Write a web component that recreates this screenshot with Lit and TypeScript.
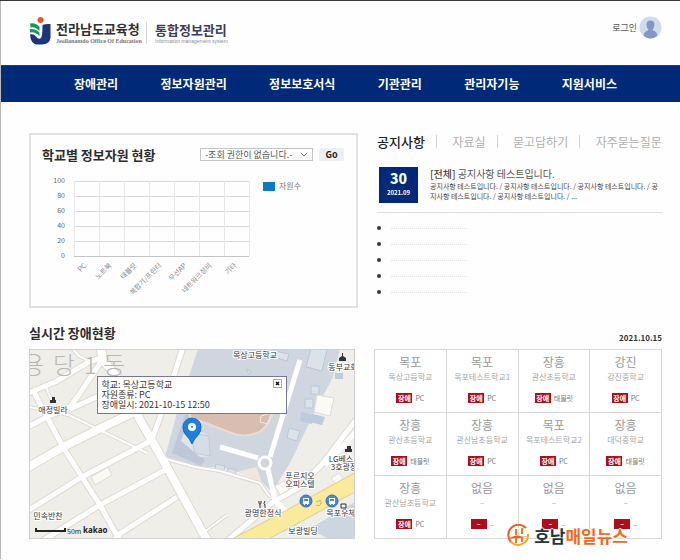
import { LitElement, html, svg, css } from "lit";
import { customElement, state } from "lit/decorators.js";

const NAV = ["장애관리", "정보자원관리", "정보보호서식", "기관관리", "관리자기능", "지원서비스"];
const TABS = ["공지사항", "자료실", "묻고답하기", "자주묻는질문"];
const KINDS = ["PC", "노트북", "태블릿", "복합기/프린터", "무선AP", "네트워크장비", "기타"];
const FAULTS = [
  ["목포", "목상고등학교", "장애", "PC"],
  ["목포", "목포테스트학교1", "장애", "PC"],
  ["장흥", "관산초등학교", "장애", "태블릿"],
  ["강진", "강진중학교", "장애", "PC"],
  ["장흥", "관산초등학교", "장애", "태블릿"],
  ["장흥", "관산남초등학교", "장애", "PC"],
  ["목포", "목포테스트학교2", "장애", "PC"],
  ["장흥", "대덕중학교", "장애", "태블릿"],
  ["장흥", "관산남초등학교", "장애", "PC"],
  ["없음", "–", "–", "–"],
  ["없음", "–", "–", "–"],
  ["없음", "–", "–", "–"],
];

const base = css`
  :host {
    display: block;
    font-family: "Noto Sans CJK KR", "Noto Sans", sans-serif;
  }
  * {
    box-sizing: border-box;
  }
  h1, h2, h3, p, ul, dl, dd {
    margin: 0;
    padding: 0;
  }
  ul {
    list-style: none;
  }
  a {
    color: inherit;
    text-decoration: none;
  }
  button {
    font-family: inherit;
    border: 0;
    padding: 0;
    margin: 0;
    background: none;
    cursor: pointer;
  }
`;

@customElement("site-header")
class SiteHeader extends LitElement {
  static styles = [
    base,
    css`
      .top {
        display: flex;
        align-items: flex-start;
        height: 64px;
        padding: 15px 18px 0 28px;
      }
      .brand {
        display: flex;
      }
      .mark {
        width: 22px;
        height: 29px;
        display: block;
      }
      .name {
        display: block;
        width: 84px;
        margin: 5px 0 0 5px;
        color: #2e2e33;
        font-size: 13px;
        line-height: 16px;
        font-weight: 700;
        white-space: nowrap;
      }
      .name small {
        display: block;
        font: 700 6px/8px "Liberation Serif", serif;
        color: #77777c;
        white-space: nowrap;
      }
      .system {
        margin: 6px 0 0 6px;
        padding-left: 8px;
        border-left: 1px solid #d4d4da;
        height: 22px;
        color: #3d3d55;
        font-size: 13px;
        line-height: 16px;
        font-weight: 700;
      }
      .system small {
        display: block;
        font: 400 5px/6px "Liberation Sans", sans-serif;
        color: #8b8b9b;
        white-space: nowrap;
      }
      .login {
        margin-left: auto;
        display: flex;
        align-items: center;
        gap: 2px;
        font-size: 9px;
        line-height: 12px;
        color: #555;
      }
      .login svg {
        width: 23px;
        height: 23px;
      }
      nav {
        display: flex;
        justify-content: space-between;
        align-items: center;
        height: 37px;
        padding: 0 63px 0 73px;
        background: #002a78;
        border-top: 1px solid #1c3f80;
        color: #fff;
        font-size: 12px;
        line-height: 16px;
        font-weight: 700;
      }
    `,
  ];
  render() {
    return html`
      <header>
        <div class="top">
          <a class="brand" href="#">
            <svg class="mark" viewBox="0 0 22 29" aria-hidden="true">
              <circle cx="11.500" cy="4" r="3" fill="#f0512c" />
              <path d="M1 7.500Q7 6.500 10.500 11V15Q6 10 1.500 11.500Z M1 13Q7 12.500 10.500 16.500V20Q6 15.500 1 16.500Z" fill="#149a5a" />
              <path d="M13.500 9Q17 7.500 21.500 8V22Q20.500 28 13 28.500H8Q1.500 27.500 1 18.500Q4.500 17.500 7 20.500Q9.500 24 12 22Q13.500 20 13.500 9Z" fill="#1c347b" />
            </svg>
            <span class="name">전라남도교육청<small>Jeollanamdo Office Of Education</small></span>
          </a>
          <div class="system">통합정보관리<small>Information management system</small></div>
          <a class="login" href="#">
            로그인
            <svg viewBox="0 0 23 23" aria-hidden="true">
              <circle cx="11.500" cy="11.500" r="11" fill="#cfdcee" />
              <path d="M11.500 4.500C8.500 4.500 7.300 6.500 7.500 9Q7.700 12 9.300 13V14.300Q5 15.500 4.500 19.800Q7.500 22.500 11.500 22.500T18.500 19.800Q18 15.500 13.700 14.300V13Q15.300 12 15.500 9C15.700 6.500 14.500 4.500 11.500 4.500Z" fill="#8496c2" />
            </svg>
          </a>
        </div>
        <nav aria-label="주메뉴">${NAV.map((n) => html`<a href="#">${n}</a>`)}</nav>
      </header>
    `;
  }
}

@customElement("resource-panel")
class ResourcePanel extends LitElement {
  static styles = [
    base,
    css`
      .panel {
        height: 100%;
        border: 2px solid #e1e1e1;
        padding: 11px 12px 0 11px;
      }
      .head {
        display: flex;
        align-items: center;
        height: 17px;
      }
      h2 {
        flex: 1;
        font-size: 13px;
        line-height: 16px;
        color: #2c2c2c;
        white-space: nowrap;
      }
      .pick {
        position: relative;
        display: block;
        width: 113px;
        height: 13px;
      }
      select {
        appearance: none;
        width: 100%;
        height: 100%;
        display: block;
        margin: 0;
        padding: 0 14px 0 4px;
        border: 1px solid #c4c4c4;
        border-radius: 0;
        background: #fff;
        color: #555;
        font-family: inherit;
        font-size: 9px;
        line-height: 11px;
      }
      .pick svg {
        position: absolute;
        right: 5px;
        top: 4px;
        width: 8px;
        height: 5px;
        pointer-events: none;
      }
      .go {
        width: 25px;
        height: 13px;
        margin-left: 6px;
        border-radius: 2px;
        background: #efefef;
        color: #222;
        font-size: 9px;
        line-height: 13px;
        font-weight: 700;
      }
      .chart {
        display: flex;
        gap: 12px;
        padding-top: 13px;
      }
      .plot {
        width: 209px;
        height: 128px;
        overflow: visible;
        flex: none;
      }
      .plot text {
        font-size: 7px;
        fill: #666;
      }
      .plot .kind {
        fill: #8a8a8a;
      }
      .legend {
        display: flex;
        align-items: center;
        gap: 4px;
        height: 10px;
        margin-top: 5px;
        font-size: 8px;
        line-height: 10px;
        color: #777;
      }
      .swatch {
        width: 12px;
        height: 9px;
        background: #0a7dc0;
      }
    `,
  ];
  render() {
    const left = 32;
    const top = 5;
    const step = 15;
    const col = 25;
    const right = left + col * 7;
    return html`
      <section class="panel">
        <div class="head">
          <h2>학교별 정보자원 현황</h2>
          <label class="pick">
            <select aria-label="학교 선택"><option>-조회 권한이 없습니다.-</option></select>
            <svg viewBox="0 0 8 5" aria-hidden="true"><path d="M1 1L4 4L7 1" fill="none" stroke="#777" /></svg>
          </label>
          <button class="go">Go</button>
        </div>
        <div class="chart">
          <svg class="plot" viewBox="0 0 209 128" role="img" aria-label="자원수">
            ${[100, 80, 60, 40, 20, 0].map(
              (v, i) => svg`
                <path d="M${left} ${top + i * step + 0.5}H${right}" stroke=${v ? "#d9d9d9" : "#c4c4c4"} />
                <text x="23" y=${top + i * step + 2} text-anchor="end">${v}</text>`
            )}
            ${[0, 1, 2, 3, 4, 5, 6, 7].map(
              (i) => svg`<path d="M${left + i * col + 0.5} ${top}V${top + 5 * step}" stroke="#e8e8e8" />`
            )}
            ${KINDS.map((k, i) => {
              const x = left + i * col + 13;
              return svg`<text class="kind" x=${x} y="90" text-anchor="end" transform="rotate(-45 ${x} 90)">${k}</text>`;
            })}
          </svg>
          <div class="legend"><span class="swatch"></span>자원수</div>
        </div>
      </section>
    `;
  }
}

@customElement("notice-board")
class NoticeBoard extends LitElement {
  @state() tab = 0;
  static styles = [
    base,
    css`
      .tabs {
        display: flex;
        justify-content: space-between;
        align-items: center;
        height: 17px;
      }
      .tabs button {
        font-size: 12px;
        line-height: 16px;
        color: #b0b0b0;
        white-space: nowrap;
      }
      .tabs button[aria-selected="true"] {
        font-size: 13px;
        font-weight: 500;
        color: #222;
      }
      .bar {
        width: 1px;
        height: 13px;
        margin-right: 4px;
        background: #d2d2d2;
      }
      .notice {
        display: flex;
        gap: 12px;
        padding: 17px 0 9px 2px;
        border-bottom: 1px solid #dcdcdc;
      }
      .date {
        flex: none;
        width: 39px;
        height: 36px;
        padding-top: 3px;
        background: #002a78;
        color: #fff;
        text-align: center;
        font-size: 6px;
        line-height: 12px;
        font-weight: 700;
      }
      .date b {
        display: block;
        font-size: 14px;
        line-height: 17px;
      }
      h3 {
        font-size: 10px;
        line-height: 14px;
        font-weight: 400;
        color: #555;
      }
      h3 b {
        font-weight: 500;
        color: #444;
      }
      .body {
        font-size: 7px;
        line-height: 10px;
        color: #444;
        word-break: break-all;
      }
      .list {
        display: grid;
        gap: 12px;
        padding-top: 13px;
      }
      .list li {
        display: flex;
        align-items: center;
        gap: 10px;
        height: 4px;
      }
      .dot {
        width: 4px;
        height: 4px;
        border-radius: 2px;
        background: #34346a;
      }
      .rule {
        width: 78px;
        border-top: 1px dotted #e4e4e4;
      }
    `,
  ];
  render() {
    return html`
      <div class="tabs" role="tablist">
        ${TABS.map(
          (t, i) => html`${i ? html`<span class="bar"></span>` : ""}<button
              role="tab"
              aria-selected=${this.tab === i ? "true" : "false"}
              @click=${() => (this.tab = i)}
            >${t}</button>`
        )}
      </div>
      <article class="notice">
        <div class="date"><b>30</b>2021.09</div>
        <div>
          <h3><b>[전체]</b> 공지사항 테스트입니다.</h3>
          <p class="body">
            공지사항 테스트입니다. / 공지사항 테스트입니다. / 공지사항 테스트입니다. / 공지사항 테스트입니다. / 공지사항 테스트입니다. / ...
          </p>
        </div>
      </article>
      <ul class="list">
        ${[0, 1, 2, 3, 4].map(() => html`<li><span class="dot"></span><span class="rule"></span></li>`)}
      </ul>
    `;
  }
}

@customElement("fault-map")
class FaultMap extends LitElement {
  @state() open = true;
  static styles = [
    base,
    css`
      .map {
        position: relative;
        overflow: hidden;
      }
      .map > svg {
        display: block;
        width: 100%;
        height: auto;
      }
      .edge {
        fill: none;
        stroke: #dddad4;
      }
      .road {
        fill: none;
        stroke: #fff;
      }
      .label {
        font-size: 8px;
        fill: #333;
        stroke: #fff;
        stroke-width: 2px;
        paint-order: stroke;
        text-anchor: middle;
      }
      .district {
        font-size: 24px;
        font-weight: 300;
        fill: #b9b6b2;
      }
      .scale {
        font-size: 7px;
        fill: #222;
      }
      .kakao {
        font: 700 8px "Noto Sans", sans-serif;
        fill: #222;
      }
      .popup {
        position: absolute;
        left: 21%;
        top: 14%;
        width: 58%;
        min-height: 37px;
        padding: 3px;
        border: 1px solid #76759a;
        background: #fff;
        font-size: 9px;
        line-height: 10px;
        color: #333;
        white-space: nowrap;
      }
      .close {
        position: absolute;
        right: 4px;
        top: 2px;
        width: 9px;
        height: 9px;
        border: 1px solid #aaa;
        display: grid;
        place-items: center;
      }
      .close svg {
        width: 5px;
        height: 5px;
      }
    `,
  ];
  roads() {
    const wide = "M71 -4L74 11L98 40L111 71L134 111L174 184L180 194 M-6 121L34 98L72 79L112 60";
    const mid =
      "M4 41L18 68L34 98L53 128L71 156L92 194 M-5 46L28 32L58 14L74 8 M74 10L51 44L41 58L18 68L-5 80 M-5 164L53 128L118 94L124 88L138 48L155 -5 M10 194L71 156L138 120 M84 192L92 184L148 148 M41 60L72 46";
    const thin = "M-5 57L40 66L118 104 M17 38L24 55 M40 -4L50 7L60 12 M134 109L166 118L191 122L231 134L241 148 M174 184L198 166";
    return svg`
      <path class="edge" d=${thin} stroke-width="4" /><path class="edge" d=${mid} stroke-width="7" /><path class="edge" d=${wide} stroke-width="10" />
      <path class="road" d=${thin} stroke-width="2" /><path class="road" d=${mid} stroke-width="5" /><path class="road" d=${wide} stroke-width="8" />`;
  }
  render() {
    return html`
      <div class="map">
        <svg viewBox="0 0 326 190" role="img" aria-label="장애 위치 지도">
          <rect width="326" height="190" fill="#f0eee8" />
          <path d="M169 0H311L304 28L288 58L261 114L243 143L228 128L191 118L166 118L136 108L148 64Z" fill="#cfd6e0" />
          <path d="M210 122L228 118L234 138Z" fill="#f0e6da" />
          <path d="M143 104L156 66H170L163 100L176 111L172 117Z" fill="#bdc7d8" />
          <path d="M152 92L158 75L180 87L181 108L171 108Z" fill="#dbe6f1" />
          <path d="M161 84L180 87L181 107L166 104Z" fill="#d5dde8" stroke="#c2cbd8" />
          <path d="M161 58H246Q242 73 232 82Q220 89 205 85L161 68Z" fill="#d8bdb0" stroke="#e9dcd3" stroke-width="2" />
          <path d="M232 67l10 -3l-3 11l-8 -2z" fill="none" stroke="#f3eae4" />
          <path d="M246 2L260 5L258 12L244 8Z M282 0H298L293 22L277 18Z M282 37h8v8h-8z M276 50h8v9h-8z M260 79l11 3l-3 10l-10 -3z M187 115l9 2l-1 5l-9 -2z M199 119l8 2l-1 5l-8 -2z M217 20l6 3l-3 2z" fill="#dce2ea" stroke="#bcc6d4" />
          <path d="M272 63l12 3l-1 9l-12 -3z M284 65l12 3l-3 8l-12 -3z M306 24h8v6h-8z" fill="#bccbdd" />
          <path d="M288 46L305 49L301 67L285 63Z" fill="#fbfaf5" stroke="#ddd" />
          ${this.roads()}
          <path d="M62 128L79 118L83 126L66 136Z" fill="#faf9f4" stroke="#dedbd4" />
          <path class="edge" d="M330 67L294 114L271 138L244 153L198 192" stroke-width="7" />
          <path class="road" d="M330 67L294 114L271 138L244 153L198 192 M296 116L326 84 M271 11L254 66L241 108 M191 98L229 109 M239 120L246 151L259 165" stroke-width="5" />
          <path d="M302 129l8 -5l6 8l-8 5z M246 137l9 -5l5 9l-9 5z" fill="#faf9f4" stroke="#ddd" />
          <circle cx="236" cy="114" r="6" fill="#cfd6e0" stroke="#fff" stroke-width="3" />
          <path d="M280 180L326 153V190H300Z" fill="#ccd6e1" />
          <path d="M206 198L261 169L332 130" fill="none" stroke="#e2cf9a" stroke-width="18" />
          <path d="M206 198L261 169L332 130" fill="none" stroke="#faeb9c" stroke-width="16" />
          <path d="M287 153q6 -3 5 1t-5 2" fill="none" stroke="#dba65f" />
          <text class="district" x="-7" y="25">용</text>
          <text class="district" x="24" y="25">당</text>
          <text class="district" x="55" y="25">1</text>
          <text class="district" x="74" y="25">동</text>
          <text class="label" x="226" y="9">목상고등학교</text>
          <text class="label" x="314" y="21">동부교회</text>
          <text class="label" x="24" y="64">애정빌라</text>
          <text class="label" x="312" y="113">LG베스</text>
          <text class="label" x="315" y="121">3호광장</text>
          <text class="label" x="271" y="130">푸르지오</text>
          <text class="label" x="271" y="138">오피스텔</text>
          <text class="label" x="234" y="167">광명한정식</text>
          <text class="label" x="312" y="167">목포우체</text>
          <text class="label" x="274" y="185">보광빌딩</text>
          <text class="label" x="19" y="170">민속반찬</text>
          <path d="M21 54V51H23V48H26V51H27V54Z M310 12V9L313 7V4H314V7L317 9V12Z M316 103V100H318V97H322V100H323V103Z" fill="#333" />
          <path d="M230 152v2q0 1 1 1v4M232 152v2q0 1 -1 1M236 152q-2 3 0 4v3M312 155h5v4h-5z" fill="none" stroke="#333" />
          ${[277, 303].map(
            (x) => svg`<circle cx=${x} cy="152" r="6" fill="#4a86d9" stroke="#2f6cc0" />
              <path d="M${x - 3} 149h6v6h-1v1h-1v-1h-2v1h-1v-1h-1z" fill="#fff" /><path d="M${x - 2} 150h4v2h-4z" fill="#4a86d9" />`
          )}
          <path d="M163 95Q161 90 157 86Q154 83 154 78A9 9 0 0 1 172 78Q172 83 169 86Q165 90 163 95Z" fill="#1f7fe0" stroke="#1767bd" />
          <circle cx="163" cy="78" r="4" fill="#fff" /><circle cx="163" cy="78" r="1" fill="#1f7fe0" />
          <path d="M7 179V182H36V179" fill="none" stroke="#222" stroke-width="2" />
          <text class="scale" x="38" y="185">50m</text>
          <text class="kakao" x="54" y="184">kakao</text>
          <rect x="0.500" y="0.500" width="325" height="189" fill="none" stroke="#cfcfcf" />
        </svg>
        ${this.open
          ? html`<div class="popup">
              <div>학교: 목상고등학교</div>
              <div>자원종류: PC</div>
              <div>장애일시: 2021-10-15 12:50</div>
              <button class="close" aria-label="닫기" @click=${() => (this.open = false)}>
                <svg viewBox="0 0 5 5"><path d="M1 1L4 4M4 1L1 4" stroke="#111" stroke-width="1.500" /></svg>
              </button>
            </div>`
          : ""}
      </div>
    `;
  }
}

@customElement("fault-grid")
class FaultGrid extends LitElement {
  static styles = [
    base,
    css`
      .grid {
        display: grid;
        grid-template-columns: repeat(4, 1fr);
        grid-template-rows: repeat(3, 1fr);
        gap: 1px;
        height: 100%;
        padding: 1px;
        background: #d8d8d8;
      }
      .card {
        background: #fff;
        text-align: center;
        padding-top: 4px;
        white-space: nowrap;
      }
      h3 {
        font-size: 12px;
        line-height: 16px;
        font-weight: 400;
        color: #999;
      }
      .school {
        font-size: 8px;
        line-height: 14px;
        color: #a6a6a6;
      }
      .state {
        display: flex;
        justify-content: center;
        align-items: center;
        gap: 3px;
        margin-top: 9px;
        height: 10px;
        font-size: 7px;
        line-height: 10px;
        color: #777;
      }
      .badge {
        width: 16px;
        height: 10px;
        background: #b00d18;
        color: #fff;
        font-weight: 700;
      }
    `,
  ];
  render() {
    return html`<ul class="grid">
      ${FAULTS.map(
        ([area, school, status, kind]) => html`<li class="card">
          <h3>${area}</h3>
          <p class="school">${school}</p>
          <p class="state"><span class="badge">${status}</span>${kind}</p>
        </li>`
      )}
    </ul>`;
  }
}

@customElement("app-root")
class AppRoot extends LitElement {
  static styles = [
    base,
    css`
      :host {
        position: relative;
        min-height: 100vh;
        box-sizing: border-box;
        background: #fefefe;
        border-top: 1px solid #39353a;
      }
      .page {
        border-left: 1px solid #b9b9b9;
      }
      main {
        padding: 31px 18px 20px 28px;
      }
      .upper {
        display: grid;
        grid-template-columns: 329fr 285fr;
        gap: 19px;
        grid-auto-rows: minmax(175px, auto);
      }
      .titles {
        display: flex;
        justify-content: space-between;
        align-items: center;
        height: 41px;
        padding-top: 9px;
      }
      h2 {
        font-size: 13px;
        line-height: 16px;
        color: #2c2c2c;
      }
      time {
        font-size: 8px;
        line-height: 12px;
        font-weight: 700;
        color: #333;
        padding-top: 10px;
      }
      .lower {
        position: relative;
        display: grid;
        grid-template-columns: 326fr 288fr;
        gap: 19px;
      }
      .press {
        position: absolute;
        right: 34px;
        bottom: -10px;
        display: flex;
        align-items: center;
        gap: 3px;
        color: #f4671c;
        font-size: 17px;
        line-height: 26px;
        font-weight: 700;
        white-space: nowrap;
        text-shadow: 1px 0 #fff, -1px 0 #fff, 0 1px #fff, 0 -1px #fff;
      }
      .press svg {
        width: 24px;
        height: 24px;
      }
      .press .ink {
        color: #25343a;
      }
    `,
  ];
  render() {
    return html`
      <div class="page">
        <site-header></site-header>
        <main>
          <div class="upper">
            <resource-panel></resource-panel>
            <notice-board></notice-board>
          </div>
          <div class="titles">
            <h2>실시간 장애현황</h2>
            <time datetime="2021-10-15">2021.10.15</time>
          </div>
          <div class="lower">
            <fault-map></fault-map>
            <fault-grid></fault-grid>
            <div class="press">
              <svg viewBox="0 0 24 24" aria-hidden="true">
                <path d="M19 4A10 10 0 1 0 4 18" fill="none" stroke="#f0611e" stroke-width="2" />
                <path d="M4 18A10 10 0 0 0 21 10" fill="none" stroke="#f6a91f" stroke-width="2" />
                <path d="M9 5V11M9 14V19M15 4V10M15 13V18" stroke="#f07a1e" stroke-width="2" />
                <path d="M1 15Q8 10 13 12T24 10Q18 14 12 14T1 15Z" fill="#f0611e" />
              </svg>
              <span><span class="ink">호남</span>매일뉴스</span>
            </div>
          </div>
        </main>
      </div>
    `;
  }
}
